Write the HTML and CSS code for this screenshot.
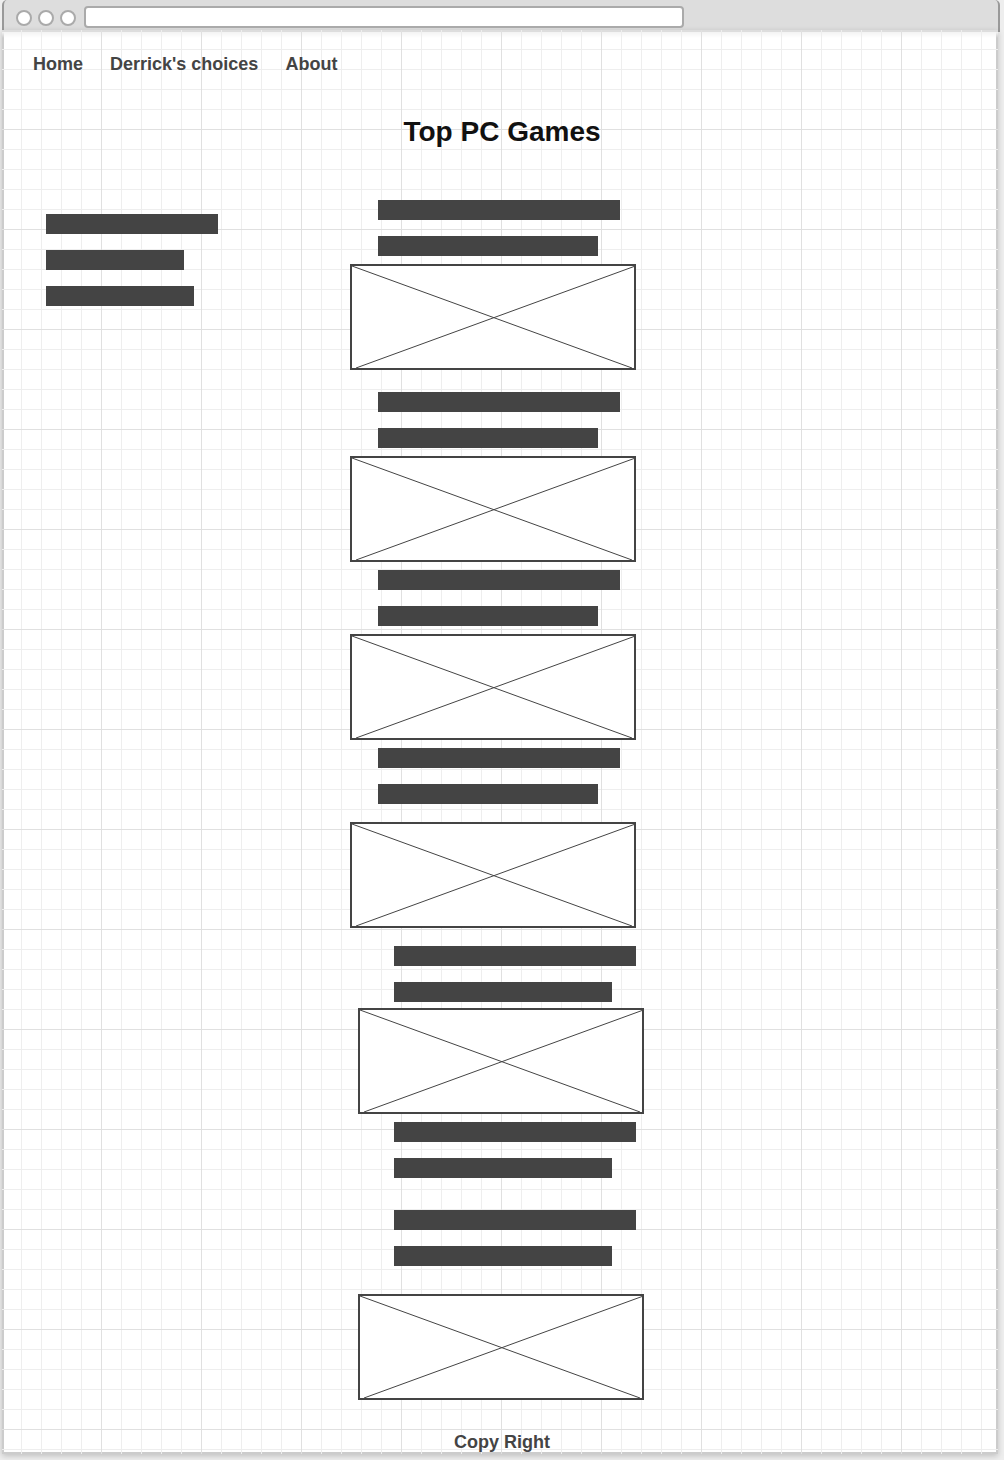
FILE: index.html
```html
<!DOCTYPE html>
<html lang="en">
<head>
<meta charset="utf-8">
<meta name="viewport" content="width=device-width, initial-scale=1">
<title>Top PC Games</title>
<link rel="stylesheet" href="styles.css">
</head>
<body>
<svg class="defs" aria-hidden="true">
  <symbol id="cross" viewBox="0 0 282 102" preserveAspectRatio="none">
    <path d="M0 0L280 102M282 0.500L4 102" fill="none" stroke="#444" stroke-width="1"/>
  </symbol>
</svg>
<div class="window">
  <header class="toolbar">
    <div class="dots"><span class="dot"></span><span class="dot"></span><span class="dot"></span></div>
    <input class="address" type="text" aria-label="Address">
  </header>
  <div class="page">
    <nav class="nav">
      <a href="#">Home</a>
      <a href="#">Derrick's choices</a>
      <a href="#">About</a>
    </nav>
    <h1 class="title">Top PC Games</h1>
    <div class="columns">
      <aside class="sidebar">
        <div class="bar bar-172"></div>
        <div class="bar bar-138"></div>
        <div class="bar bar-148"></div>
      </aside>
      <main class="games">
        <section class="game space-large">
          <div class="lines"><div class="bar bar-242"></div><div class="bar bar-220"></div></div>
          <svg class="picture" role="img" aria-label="Game picture"><use href="#cross"/></svg>
        </section>
        <section class="game">
          <div class="lines"><div class="bar bar-242"></div><div class="bar bar-220"></div></div>
          <svg class="picture" role="img" aria-label="Game picture"><use href="#cross"/></svg>
        </section>
        <section class="game">
          <div class="lines"><div class="bar bar-242"></div><div class="bar bar-220"></div></div>
          <svg class="picture" role="img" aria-label="Game picture"><use href="#cross"/></svg>
        </section>
        <section class="game roomy space-medium">
          <div class="lines"><div class="bar bar-242"></div><div class="bar bar-220"></div></div>
          <svg class="picture" role="img" aria-label="Game picture"><use href="#cross"/></svg>
        </section>
        <section class="game indented tight">
          <div class="lines"><div class="bar bar-242"></div><div class="bar bar-218"></div></div>
          <svg class="picture" role="img" aria-label="Game picture"><use href="#cross"/></svg>
        </section>
        <section class="game indented space-wide">
          <div class="lines"><div class="bar bar-242"></div><div class="bar bar-218"></div></div>
        </section>
        <section class="game indented loose space-wide">
          <div class="lines"><div class="bar bar-242"></div><div class="bar bar-218"></div></div>
          <svg class="picture" role="img" aria-label="Game picture"><use href="#cross"/></svg>
        </section>
      </main>
    </div>
    <footer class="footer">Copy Right</footer>
  </div>
</div>
</body>
</html>
```
FILE: styles.css
```css
* {
  box-sizing: border-box;
}

body {
  margin: 0;
  background: #eee;
  color: #444;
  font: bold 18px/20px "Liberation Sans", Arial, Helvetica, sans-serif;
}

.defs {
  display: none;
}

.window {
  padding: 0 4px 6px 2px;
}

/* Browser bar */
.toolbar {
  display: flex;
  gap: 8px;
  padding: 6px 12px 4px;
  margin-bottom: -2px;
  background: #ddd;
  border: solid #999;
  border-width: 0 2px;
  border-radius: 5px 5px 0 0;
}

.dots {
  display: flex;
  align-items: center;
  gap: 6px;
  padding-top: 2px;
}

.dot {
  width: 16px;
  height: 16px;
  background: #fff;
  border: 2px solid #aaa;
  border-radius: 50%;
}

.address {
  flex: 0 1 600px;
  min-width: 0;
  height: 22px;
  padding: 0 6px;
  background: #fff;
  border: 2px solid #aaa;
  border-radius: 4px;
  font: 14px "Liberation Sans", Arial, sans-serif;
}

/* Squared paper: fine lines every 20px, stronger ones every 100px */
.page {
  margin-right: 2px;
  border: 2px solid transparent;
  background:
    linear-gradient(to right, transparent 99px, #e0e0e0 99px) 0 0 / 100px 100px border-box border-box,
    linear-gradient(to bottom, transparent 99px, #e0e0e0 99px) 0 0 / 100px 100px border-box border-box,
    linear-gradient(to right, transparent 19px, #eee 19px) 0 0 / 20px 20px border-box border-box,
    linear-gradient(to bottom, transparent 19px, #eee 19px) 0 0 / 20px 20px border-box border-box,
    linear-gradient(to bottom, #ddd 2px, #f3f3f3 2px, transparent 8px) 0 0 / 100% 8px no-repeat border-box border-box,
    linear-gradient(#fff, #fff) padding-box,
    linear-gradient(#ccc, #ccc) border-box;
  box-shadow: 0 2px 6px rgba(0, 0, 0, 0.2);
}

.nav {
  display: flex;
  flex-wrap: wrap;
  gap: 27px;
  padding: 22px 29px 0;
}

.nav a {
  color: inherit;
  text-decoration: none;
}

.title {
  margin: 42px 0 52px;
  padding-left: 4px;
  color: #111;
  font-size: 28px;
  line-height: 32px;
  text-align: center;
}

.columns {
  display: grid;
  grid-template-columns: 1fr 300px 1fr;
}

.sidebar {
  display: flex;
  flex-direction: column;
  gap: 16px;
  padding: 14px 0 0 42px;
}

.bar {
  height: 20px;
  max-width: 100%;
  background: #444;
}

.bar-138 { width: 138px; }
.bar-148 { width: 148px; }
.bar-172 { width: 172px; }
.bar-218 { width: 218px; }
.bar-220 { width: 220px; }
.bar-242 { width: 242px; }

.game {
  display: flex;
  flex-direction: column;
  gap: 8px;
  margin-bottom: 8px;
}

.lines {
  display: flex;
  flex-direction: column;
  gap: 16px;
  padding-left: 28px;
}

.picture {
  width: 286px;
  height: 106px;
  background: #fff;
  border: 2px solid #444;
}

.indented { padding-left: 8px; }
.indented .lines { padding-left: 36px; }

.tight { gap: 6px; }
.roomy { gap: 18px; }
.loose { gap: 28px; }

.space-medium { margin-bottom: 18px; }
.space-large { margin-bottom: 22px; }
.space-wide { margin-bottom: 32px; }

.footer {
  padding-left: 4px;
  text-align: center;
}
```
